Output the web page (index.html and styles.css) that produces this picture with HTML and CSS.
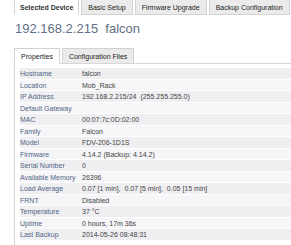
FILE: index.html
```html
<!DOCTYPE html>
<html lang="en">
    <head>
        <title>Selected Device</title>
        <link rel="stylesheet" href="styles.css">
    </head>
    <body>
        <!-- Main tabs -->
        <nav class="tabs">
            <span class="tab active">Selected Device</span>
            <span class="tab">Basic Setup</span>
            <span class="tab">Firmware Upgrade</span>
            <span class="tab">Backup Configuration</span>
        </nav>

        <h1 class="device-title">192.168.2.215&nbsp; falcon</h1>

        <!-- Sub tabs -->
        <nav class="subtabs">
            <span class="subtab active">Properties</span>
            <span class="subtab">Configuration Files</span>
        </nav>

        <section class="props">
            <div class="row"><span class="key">Hostname</span><span class="val">falcon</span></div>
            <div class="row"><span class="key">Location</span><span class="val">Mob_Rack</span></div>
            <div class="row"><span class="key">IP Address</span><span class="val">192.168.2.215/24&nbsp; (255.255.255.0)</span></div>
            <div class="row"><span class="key">Default Gateway</span><span class="val"></span></div>
            <div class="row"><span class="key">MAC</span><span class="val">00:07:7c:0D:02:00</span></div>
            <div class="row"><span class="key">Family</span><span class="val">Falcon</span></div>
            <div class="row"><span class="key">Model</span><span class="val">FDV-206-1D1S</span></div>
            <div class="row"><span class="key">Firmware</span><span class="val">4.14.2 (Backup: 4.14.2)</span></div>
            <div class="row"><span class="key">Serial Number</span><span class="val">0</span></div>
            <div class="row"><span class="key">Available Memory</span><span class="val">26396</span></div>
            <div class="row"><span class="key">Load Average</span><span class="val">0.07 [1 min],&nbsp; 0.07 [5 min],&nbsp; 0.05 [15 min]</span></div>
            <div class="row"><span class="key">FRNT</span><span class="val">Disabled</span></div>
            <div class="row"><span class="key">Temperature</span><span class="val">37 &deg;C</span></div>
            <div class="row"><span class="key">Uptime</span><span class="val">0 hours, 17m 36s</span></div>
            <div class="row"><span class="key">Last Backup</span><span class="val">2014-05-26 08:48:31</span></div>
        </section>
    </body>
</html>
```

FILE: styles.css
```css
/* Page */
body {
    margin: 0;
    padding: 0 0 0 14px;
    font-family: "Liberation Sans", Arial, sans-serif;
    font-size: 7px;
    color: #333;
    background-color: #fff;
    overflow: hidden;
}

/* Main tabs */
.tabs {
    display: flex;
    gap: 2px;
    height: 15px;
}

.tab {
    display: flex;
    align-items: center;
    padding: 0 6px;
    background-color: #ebebeb;
    border: 1px solid #d2d2d2;
    border-top: none;
    color: #222;
    white-space: nowrap;
}

.tab.active {
    background-color: #fff;
    border-bottom-color: #fff;
    padding: 0 5px;
    font-weight: bold;
    color: #333;
}

/* Device title */
.device-title {
    margin: 5px 0 0 1px;
    font-size: 13px;
    font-weight: normal;
    color: #5f6f85;
    line-height: 18px;
}

/* Sub tabs */
.subtabs {
    display: flex;
    gap: 2px;
    height: 15px;
    margin-top: 10px;
    border-bottom: 1px solid #d6d6d6;
}

.subtab {
    display: flex;
    align-items: center;
    padding: 0 6px;
    background-color: #ebebeb;
    border: 1px solid #d2d2d2;
    border-bottom: none;
    color: #222;
    white-space: nowrap;
}

.subtab.active {
    background-color: #fff;
    margin-bottom: -1px;
}

/* Property list */
.props {
    border-left: 1px solid #d6d6d6;
    padding: 4px 0 10px 5px;
}

.row {
    display: flex;
    height: 11.5px;
    line-height: 11px;
    border-bottom: 1px solid #fff;
    box-sizing: border-box;
    background-color: #f6f6f8;
}

.row:nth-child(odd) {
    background-color: #efeff2;
}

.key {
    width: 62px;
    color: #4f6584;
    white-space: nowrap;
}

.val {
    color: #444;
    white-space: nowrap;
}
```
